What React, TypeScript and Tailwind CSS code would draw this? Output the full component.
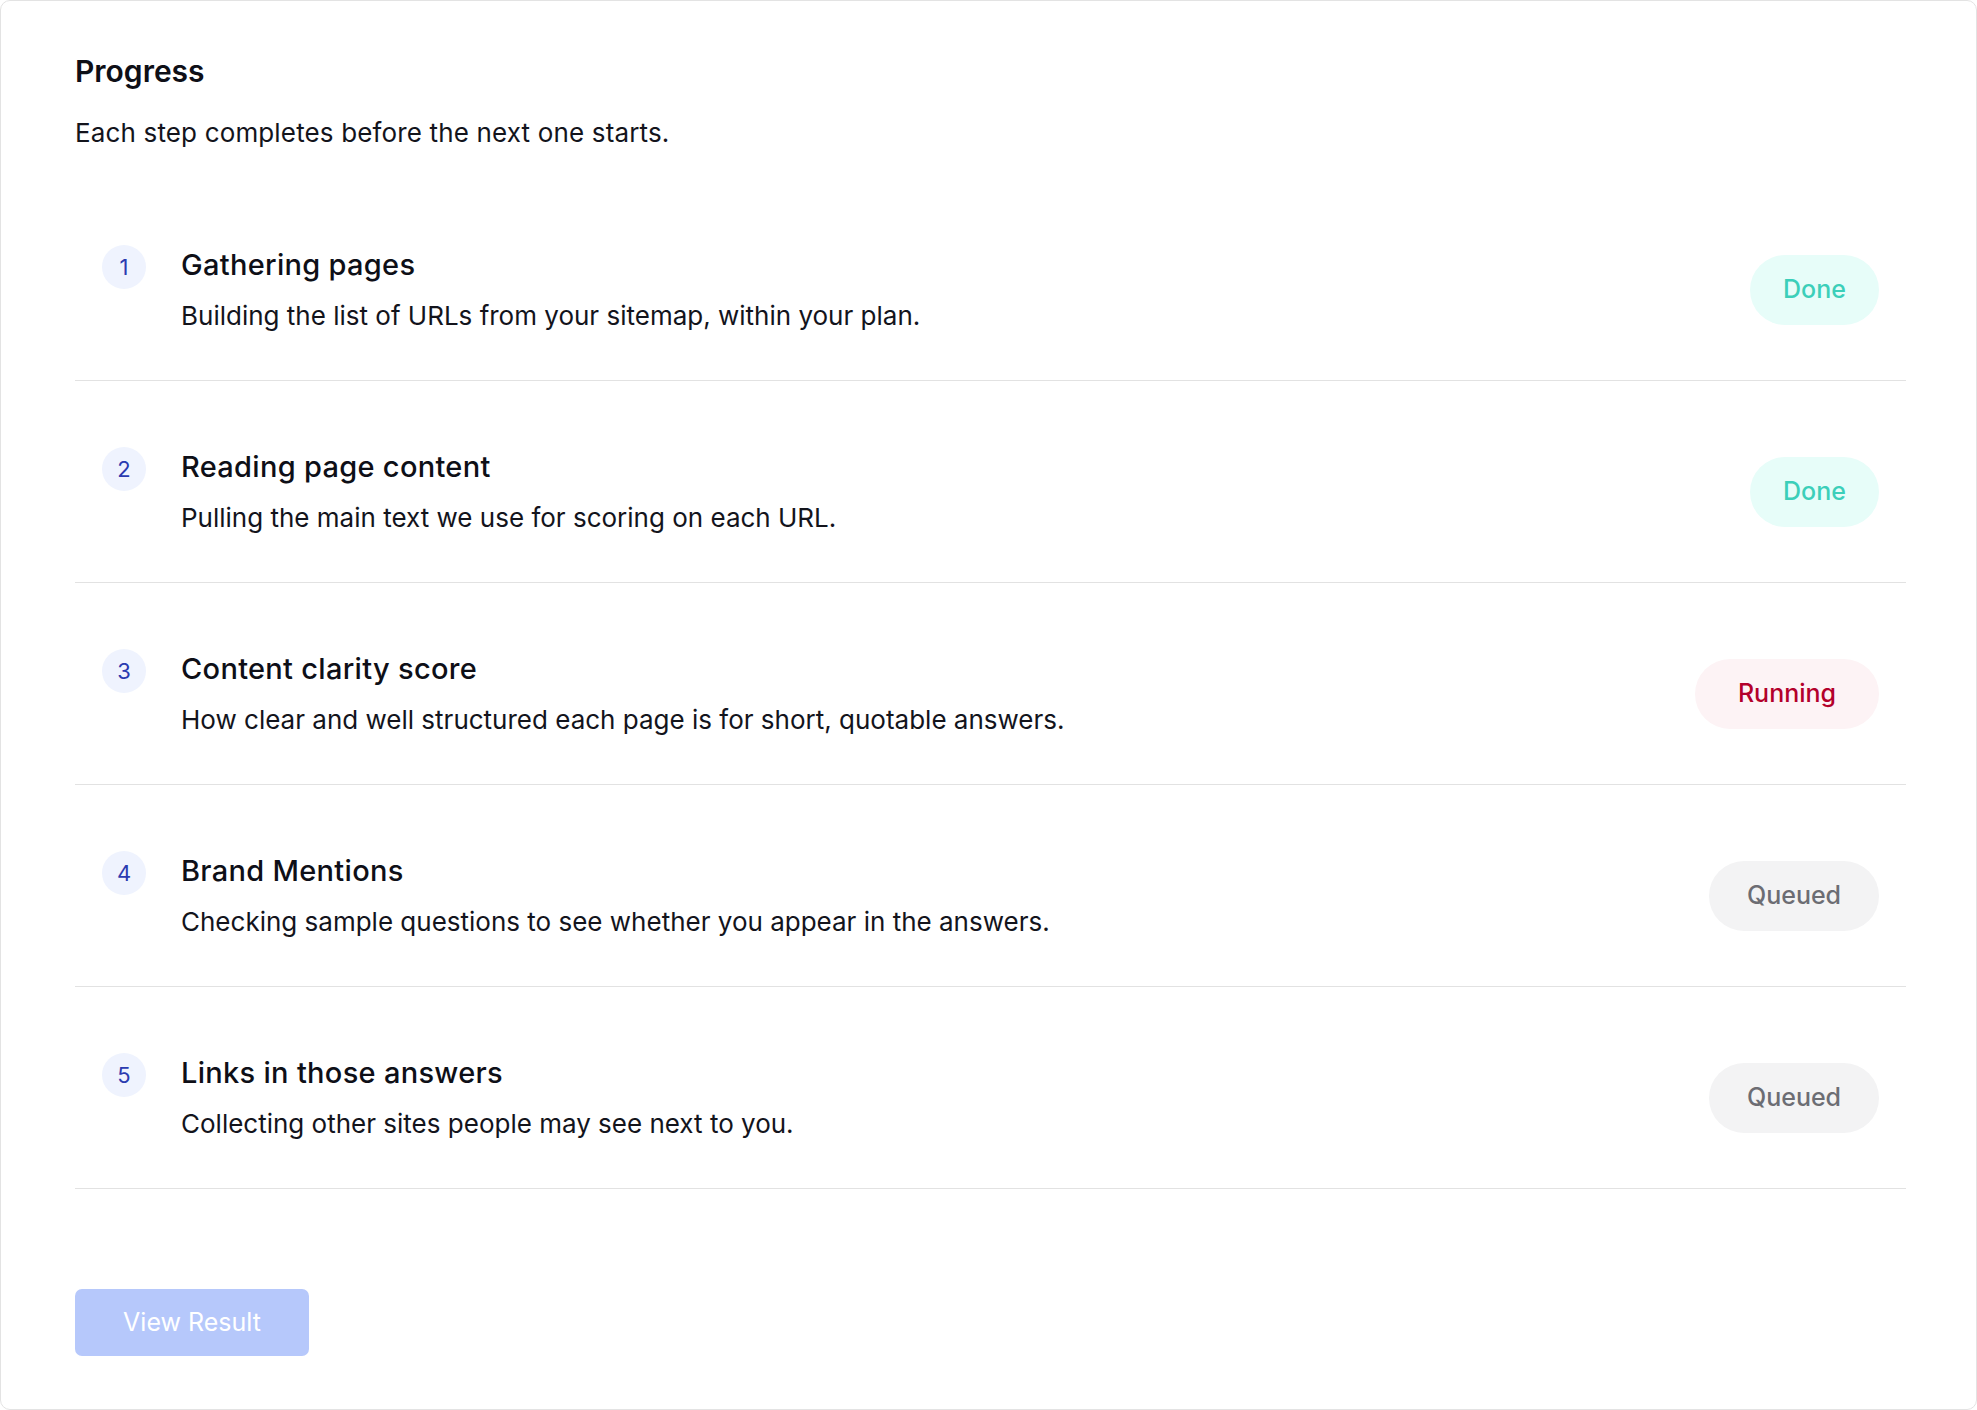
import React from "react";

type Status = "done" | "running" | "queued";

interface Step {
  n: number;
  title: string;
  desc: string;
  status: Status;
}

const steps: Step[] = [
  { n: 1, title: "Gathering pages", desc: "Building the list of URLs from your sitemap, within your plan.", status: "done" },
  { n: 2, title: "Reading page content", desc: "Pulling the main text we use for scoring on each URL.", status: "done" },
  { n: 3, title: "Content clarity score", desc: "How clear and well structured each page is for short, quotable answers.", status: "running" },
  { n: 4, title: "Brand Mentions", desc: "Checking sample questions to see whether you appear in the answers.", status: "queued" },
  { n: 5, title: "Links in those answers", desc: "Collecting other sites people may see next to you.", status: "queued" },
];

function Badge({ status }: { status: Status }) {
  if (status === "done") {
    return (
      <span className="flex h-[70px] w-[129px] items-center justify-center rounded-full bg-[#e7fdf9] text-[25px] font-medium text-[#3ccfb9]">
        Done
      </span>
    );
  }
  if (status === "running") {
    return (
      <span className="flex h-[70px] w-[184px] items-center justify-center rounded-full bg-[#fdf3f5] text-[25px] font-medium text-[#b3002b]">
        Running
      </span>
    );
  }
  return (
    <span className="flex h-[70px] w-[170px] items-center justify-center rounded-full bg-[#f3f3f4] text-[25px] font-medium text-[#6c6d73]">
      Queued
    </span>
  );
}

export default function App() {
  return (
    <div
      className="h-[1410px] w-full bg-white"
      style={{ fontFamily: "Inter, 'Noto Sans', sans-serif" }}
    >
      <div className="flex h-full flex-col rounded-[10px] border border-[#e3e3e3] pl-[74px] pr-[70px] pt-[50px]">
        <h1 className="text-[30px] font-semibold leading-[40px] text-[#0e0f17]">Progress</h1>
        <p className="mt-[26px] text-[26px] leading-[32px] tracking-[0.15px] text-[#13141c]">
          Each step completes before the next one starts.
        </p>

        <div className="mt-[30px] flex flex-col">
          {steps.map((s) => (
            <div key={s.n} className="flex items-start border-b border-[#e2e2e2] pt-[68px] pb-[48px]">
              <div className="ml-[27px] mt-[-2px] flex h-[44px] w-[44px] shrink-0 items-center justify-center rounded-full bg-[#eff3fe] text-[22px] text-[#2b3bb0]">
                {s.n}
              </div>
              <div className="ml-[35px] flex flex-1 flex-col">
                <div className="text-[29px] font-medium leading-[36px] tracking-[0.3px] text-[#0e0f17]">{s.title}</div>
                <div className="mt-[17px] text-[26px] leading-[32px] text-[#13141c]">{s.desc}</div>
              </div>
              <div className="mr-[27px] self-center">
                <Badge status={s.status} />
              </div>
            </div>
          ))}
        </div>

        <div className="mt-[100px]">
          <button className="h-[67px] w-[234px] rounded-[7px] bg-[#b6c8fb] text-[25px] text-white">
            View Result
          </button>
        </div>
      </div>
    </div>
  );
}
